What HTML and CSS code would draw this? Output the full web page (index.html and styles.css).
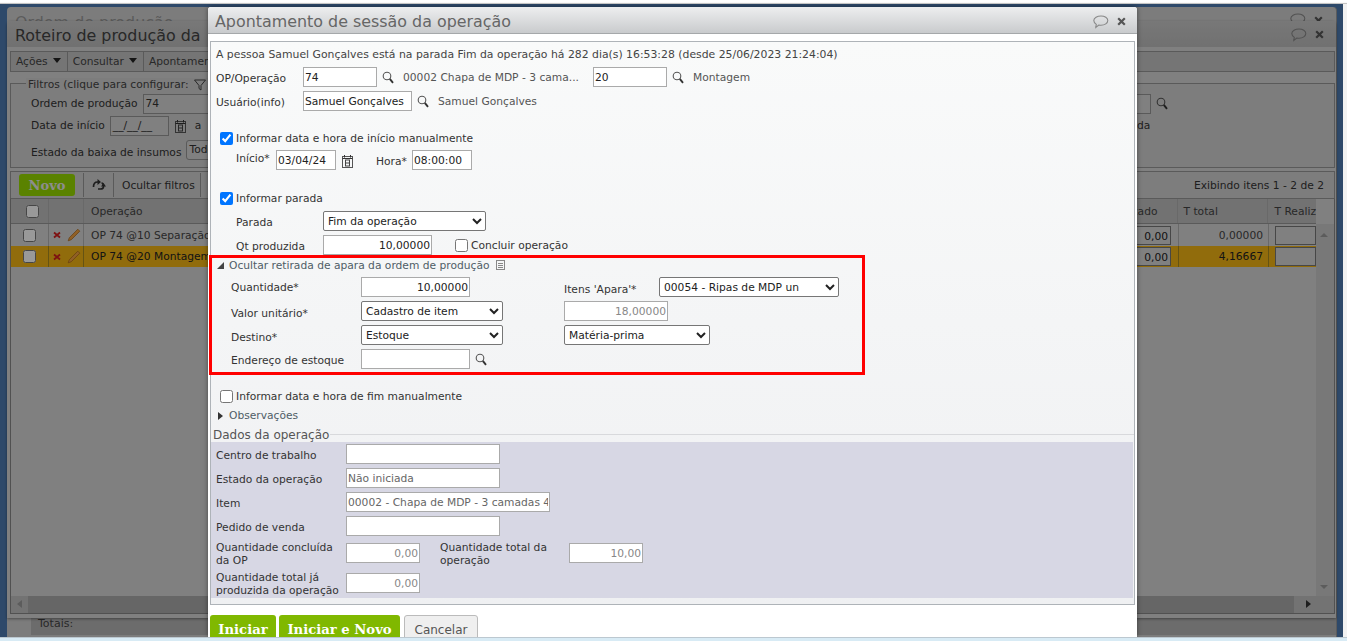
FILE: index.html
```html
<!DOCTYPE html>
<html lang="pt-BR">
<head>
<meta charset="utf-8">
<title>Apontamento de sessão da operação</title>
<link rel="stylesheet" href="styles.css">
</head>
<body>
<svg class="defs" width="0" height="0" aria-hidden="true">
  <symbol id="i-search" viewBox="0 0 12 13"><circle cx="5" cy="5" r="3.800" fill="none" stroke="#555" stroke-width="1.100"/><path d="M7.800 7.800 11 11.800" stroke="#333" stroke-width="1.900" fill="none"/></symbol>
  <symbol id="i-cal" viewBox="0 0 13 14"><rect x="1.500" y="2.500" width="10" height="11" fill="none" stroke="#555"/><path d="M1.500 4.500h10M3.500 1v2.500M9.500 1v2.500" stroke="#333" fill="none"/><rect x="4.500" y="6" width="4" height="6" fill="none" stroke="#444"/><path d="M4.500 9h4" stroke="#444"/></symbol>
  <symbol id="i-bubble" viewBox="0 0 17 16"><path d="M9 2c3.700 0 6.800 1.900 6.800 4.600s-3.100 4.600-6.800 4.600c-.8 0-1.500-.1-2.200-.2L3.800 13.500l.5-3.100C2.800 9.500 1.800 8.200 1.800 6.600 1.800 3.900 5.300 2 9 2z" fill="none" stroke="#888" stroke-width="1.100"/></symbol>
  <symbol id="i-close" viewBox="0 0 9 9"><path d="M1.200 1.200 7.800 7.800M7.800 1.200 1.200 7.800" stroke="#555" stroke-width="2.200"/></symbol>
  <symbol id="i-x" viewBox="0 0 8 8"><path d="M1 1.500 7 6.500M7 1.500 1 6.500" stroke="#d21f1f" stroke-width="1.800"/></symbol>
  <symbol id="i-pencil" viewBox="0 0 14 14"><path d="M1.200 12.800 2.300 9.700 10.800 1.200 12.800 3.200 4.300 11.700z" fill="#f0a040" stroke="#a8661a" stroke-width=".7"/></symbol>
  <symbol id="i-doc" viewBox="0 0 9 10"><rect x=".5" y=".5" width="8" height="9" fill="none" stroke="#888"/><path d="M2 3.500h5M2 5.500h5M2 7.500h5" stroke="#888"/></symbol>
  <symbol id="i-funnel" viewBox="0 0 12 12"><path d="M.5 1h11L7 6.500V11L5 9.500v-3z" fill="none" stroke="#444"/></symbol>
  <symbol id="i-refresh" viewBox="0 0 14 12"><path d="M1.500 8C1.500 4.500 3 3 5.500 3H7M9.500 4c1.500 0 2 1.500 2 3.500 0 1.500-1 2.500-3 2.500H6" fill="none" stroke="#333" stroke-width="1.700"/><path d="M5.500 0v6L9 3zM11.500 4 9 7.500h5z" fill="#333"/></symbol>
</svg>

<div class="desk">
  <section class="win win-back">
    <h2 class="win-title">Ordem de produção</h2>
    <div class="win-tools"><svg class="ico-bubble"><use href="#i-bubble"/></svg><svg class="ico-close"><use href="#i-close"/></svg></div>
    <div class="back-total"><span>Totais:</span></div>
  </section>

  <section class="win win-main">
    <header class="main-head">
      <h2 class="win-title">Roteiro de produção da</h2>
      <div class="win-tools"><svg class="ico-bubble"><use href="#i-bubble"/></svg><svg class="ico-close"><use href="#i-close"/></svg></div>
    </header>
    <nav class="menu">
      <span class="menu-item">Ações <i class="caret"></i></span>
      <span class="menu-item">Consultar <i class="caret"></i></span>
      <span class="menu-item">Apontamentos</span>
    </nav>
    <div class="filters">
      <div class="filters-legend">Filtros (clique para configurar: <svg class="ico-funnel"><use href="#i-funnel"/></svg></div>
      <div class="filters-body">
        <div class="filter-col">
          <div class="f-row"><span>Ordem de produção</span><span class="f-input f-wide">74</span></div>
          <div class="f-row"><span>Data de início</span><span class="f-input f-date">__/__/__</span><svg class="ico-cal"><use href="#i-cal"/></svg><span class="f-a">a</span></div>
          <div class="f-row f-row3"><span>Estado da baixa de insumos</span><span class="f-input f-sel">Todos</span></div>
        </div>
        <div class="filter-right">
          <div class="f-row"><span class="f-input f-tiny"></span><svg class="ico-search"><use href="#i-search"/></svg></div>
          <div class="f-row f-da"><span>da</span></div>
        </div>
      </div>
    </div>
    <div class="grid-tools">
      <span class="btn-new">Novo</span>
      <span class="gt-cell"><svg class="ico-refresh"><use href="#i-refresh"/></svg></span>
      <span class="gt-cell gt-filters">Ocultar filtros</span>
      <span class="gt-count">Exibindo itens 1 - 2 de 2</span>
    </div>
    <div class="grid">
      <div class="g-row g-head">
        <span class="c-check"><input type="checkbox" class="cb" aria-label="Selecionar todos"></span>
        <span class="c-act"></span>
        <span class="c-op">Operação</span>
        <span class="c-real">zado</span>
        <span class="c-total">T total</span>
        <span class="c-treal">T Realiz</span>
      </div>
      <div class="g-row">
        <span class="c-check"><input type="checkbox" class="cb" aria-label="Selecionar"></span>
        <span class="c-act"><svg class="ico-x"><use href="#i-x"/></svg><svg class="ico-pencil"><use href="#i-pencil"/></svg></span>
        <span class="c-op">OP 74 @10 Separação</span>
        <span class="c-real"><span class="g-input">0,00</span></span>
        <span class="c-total num">0,00000</span>
        <span class="c-treal"><span class="g-input"></span></span>
      </div>
      <div class="g-row g-sel">
        <span class="c-check"><input type="checkbox" class="cb" aria-label="Selecionar"></span>
        <span class="c-act"><svg class="ico-x"><use href="#i-x"/></svg><svg class="ico-pencil"><use href="#i-pencil"/></svg></span>
        <span class="c-op">OP 74 @20 Montagem</span>
        <span class="c-real"><span class="g-input">0,00</span></span>
        <span class="c-total num">4,16667</span>
        <span class="c-treal"><span class="g-input"></span></span>
      </div>
      <div class="sb-v"><i class="tri-up"></i><i class="tri-down"></i></div>
      <div class="sb-h"><i class="tri-left"></i><i class="tri-right"></i></div>
    </div>
  </section>

  <div class="overlay"></div>

  <section class="modal">
    <header class="modal-head">
      <h1>Apontamento de sessão da operação</h1>
      <div class="win-tools"><svg class="ico-bubble"><use href="#i-bubble"/></svg><svg class="ico-close"><use href="#i-close"/></svg></div>
    </header>
    <form class="panel">
      <p class="info">A pessoa Samuel Gonçalves está na parada Fim da operação há 282 dia(s) 16:53:28 (desde 25/06/2023 21:24:04)</p>

      <div class="row">
        <label class="lbl w-op">OP/Operação</label>
        <input class="in w74" value="74">
        <svg class="ico-search s1"><use href="#i-search"/></svg>
        <span class="txt w-item">00002 Chapa de MDP - 3 cama...</span>
        <input class="in w74" value="20">
        <svg class="ico-search s1"><use href="#i-search"/></svg>
        <span class="txt">Montagem</span>
      </div>
      <div class="row">
        <label class="lbl w-op">Usuário(info)</label>
        <input class="in w109" value="Samuel Gonçalves">
        <svg class="ico-search s1"><use href="#i-search"/></svg>
        <span class="txt">Samuel Gonçalves</span>
      </div>

      <label class="check-row gap-top"><input type="checkbox" checked><span>Informar data e hora de início manualmente</span></label>
      <div class="row ind">
        <label class="lbl lbl-inicio">Início*</label>
        <input class="in w60" value="03/04/24">
        <svg class="ico-cal"><use href="#i-cal"/></svg>
        <label class="lbl lbl-hora">Hora*</label>
        <input class="in w60" value="08:00:00">
      </div>

      <label class="check-row gap-parada"><input type="checkbox" checked><span>Informar parada</span></label>
      <div class="row ind">
        <label class="lbl w-parada lbl-p">Parada</label>
        <select class="sel w163"><option>Fim da operação</option></select>
      </div>
      <div class="row ind">
        <label class="lbl w-parada">Qt produzida</label>
        <input class="in num w109" value="10,00000">
        <label class="check-inline"><input type="checkbox"><span>Concluir operação</span></label>
      </div>

      <section class="apara">
        <div class="toggle"><i class="tri-open"></i><span>Ocultar retirada de apara da ordem de produção</span><svg class="ico-doc"><use href="#i-doc"/></svg></div>
        <div class="a-row">
          <label class="lbl w-a lbl-flat">Quantidade*</label>
          <input class="in num w109" value="10,00000">
          <label class="lbl w-itens">Itens 'Apara'*</label>
          <select class="sel w180"><option>00054 - Ripas de MDP un</option></select>
        </div>
        <div class="a-row">
          <label class="lbl w-a">Valor unitário*</label>
          <select class="sel w142"><option>Cadastro de item</option></select>
          <input class="in num dis w104 a-col2" value="18,00000" disabled>
        </div>
        <div class="a-row">
          <label class="lbl w-a">Destino*</label>
          <select class="sel w142"><option>Estoque</option></select>
          <select class="sel w146 a-col2"><option>Matéria-prima</option></select>
        </div>
        <div class="a-row">
          <label class="lbl w-a lbl-end">Endereço de estoque</label>
          <input class="in w109">
          <svg class="ico-search s2"><use href="#i-search"/></svg>
        </div>
      </section>

      <label class="check-row gap-fim"><input type="checkbox"><span>Informar data e hora de fim manualmente</span></label>
      <div class="toggle toggle-obs"><i class="tri-closed"></i><span>Observações</span></div>

      <div class="legend"><span>Dados da operação</span></div>
      <div class="dados">
        <div class="d-row"><label class="lbl w-d">Centro de trabalho</label><input class="in w154"></div>
        <div class="d-row"><label class="lbl w-d">Estado da operação</label><input class="in ro w154" value="Não iniciada"></div>
        <div class="d-row"><label class="lbl w-d">Item</label><input class="in ro w204" value="00002 - Chapa de MDP - 3 camadas 4 mm"></div>
        <div class="d-row"><label class="lbl w-d">Pedido de venda</label><input class="in w154"></div>
        <div class="d-row d-two">
          <label class="lbl w-d two">Quantidade concluída da OP</label><input class="in num dis w74" value="0,00">
          <label class="lbl w-d2 two">Quantidade total da operação</label><input class="in num dis w74" value="10,00">
        </div>
        <div class="d-row d-last"><label class="lbl w-d two">Quantidade total já produzida da operação</label><input class="in num dis w74" value="0,00"></div>
      </div>
    </form>
    <footer class="actions">
      <button type="button" class="btn-go">Iniciar</button>
      <button type="button" class="btn-go">Iniciar e Novo</button>
      <button type="button" class="btn-cancel">Cancelar</button>
    </footer>
  </section>

  <div class="strip-top"></div>
  <div class="strip-right"></div>
  <div class="strip-bottom"></div>
</div>
</body>
</html>
```

FILE: styles.css
```css
* { box-sizing: border-box; }
html, body { margin: 0; padding: 0; height: 100%; overflow: hidden; }
body { font: 10.7px "DejaVu Sans", "Noto Sans", sans-serif; color: #333; background: #fff; }
.defs { position: absolute; }
svg { display: block; flex: none; }
.desk { position: relative; width: 1347px; height: 641px; overflow: hidden; background: #4e7bb1; }

/* page chrome strips */
.strip-top { position: absolute; left: 0; top: 0; width: 100%; height: 4px; background: linear-gradient(#fff 60%, #aaa); }
.strip-right { position: absolute; right: 0; top: 4px; width: 4px; height: 633px; background: #f2f2f2; }
.strip-bottom { position: absolute; left: 0; bottom: 0; width: 100%; height: 4px; background: #d8ebf5; border-top: 1px solid #bcc8d0; }
.overlay { position: absolute; inset: 0; background: rgba(0, 0, 0, .4); }

/* background windows */
.win { position: absolute; background: #d5d5d5; border-radius: 4px 4px 0 0; }
.win-back { left: 7px; top: 7px; width: 1330px; height: 630px; background: #cfcfcf; border-right: 1px solid #999; }
.win-back .win-title { padding: 4px 8px; color: #999; }
.win-back .win-tools { position: absolute; right: 13px; top: 5px; }
.back-total { position: absolute; left: 24px; right: 0; bottom: 2px; height: 17px; background: #b5b5b5; padding-left: 7px; font-size: 11px; line-height: 12px; color: #444; }
.win-main { left: 7px; top: 21px; width: 1329px; height: 597px; box-shadow: 0 1px 3px rgba(0,0,0,.4); }
.win-title { margin: 0; font-size: 15.900px; font-weight: 400; color: #444; white-space: nowrap; line-height: 24px; }
.main-head { display: flex; justify-content: space-between; align-items: center; height: 26px; padding: 4px 12px 0 8px; background: linear-gradient(#c8c8c8, #bcbcbc); }
.main-head .win-tools { margin-top: -3px; }
.win-tools { display: flex; align-items: center; gap: 8px; }
.ico-bubble { width: 17px; height: 16px; }
.ico-close { width: 9px; height: 9px; }
.menu { display: flex; height: 21px; margin: 4px 1px 0 3px; background: #c3c3c3; border: 1px solid #969696; align-items: center; }
.menu-item { display: flex; align-items: center; gap: 5px; height: 100%; padding: 0 6px 0 5px; border-right: 1px solid #969696; color: #444; white-space: nowrap; }
.caret { width: 0; height: 0; border: 4px solid transparent; border-top: 5px solid #222; border-bottom: 0; margin-top: -2px; }
.filters { position: relative; margin: 11px 1px 0 3px; height: 85px; background: #d0d0d0; border: 1px solid #969696; }
.filters-legend { position: absolute; left: 15px; top: -6px; display: flex; align-items: center; gap: 5px; background: #d0d0d0; padding: 0 2px; line-height: 14px; color: #444; }
.ico-funnel { width: 12px; height: 12px; }
.filters-body { display: flex; justify-content: space-between; padding: 9px 0 0 20px; }
.f-row { display: flex; align-items: center; gap: 5px; height: 21px; color: #333; white-space: nowrap; }
.f-row + .f-row { margin-top: 1px; }
.f-row3 { margin-top: 6px !important; }
.f-input { display: block; height: 20px; border: 1px solid #969696; background: #d5d5d5; padding-left: 2px; line-height: 17px; }
.f-wide { width: 200px; }
.f-date { width: 59px; }
.f-sel { width: 60px; margin-top: -6px; border-radius: 3px; }
.f-tiny { width: 30px; }
.f-a { margin-left: 3px; }
.ico-cal { width: 13px; height: 14px; }
.filter-right { width: 213px; }
.f-da { padding-left: 16px; }
.ico-search { width: 12px; height: 13px; }
.grid-tools { display: flex; align-items: center; margin: 3px 1px 0 3px; height: 27px; background: #d0d0d0; border: 1px solid #969696; border-bottom: 0; padding-left: 8px; }
.btn-new { width: 56px; height: 22px; border-radius: 3px; background: #96d900; color: #ececec; font: 700 13px/23px "DejaVu Serif", serif; text-align: center; margin-right: 8px; flex: none; }
.gt-cell { display: flex; align-items: center; height: 24px; border-left: 1px solid #969696; padding: 0 7px 0 8px; color: #333; }
.gt-filters { border-right: 1px solid #969696; width: 88px; white-space: nowrap; }
.gt-count { margin-left: auto; padding-right: 10px; color: #333; white-space: nowrap; }
.ico-refresh { width: 14px; height: 12px; }
.grid { position: relative; margin: 0 1px 0 3px; height: 416px; background: #d5d5d5; border: 1px solid #888; border-top: 1px solid #969696; }
.g-row { display: flex; align-items: stretch; height: 22px; margin-right: 18px; color: #444; white-space: nowrap; overflow: hidden; }
.g-row > span { display: flex; align-items: center; border-right: 1px solid #b0b0b0; }
.g-head { height: 25px; background: #bebebe; border-bottom: 1px solid #969696; }
.g-head > span { color: #444; }
.g-head .cb { margin-left: 6px; }
.g-head .c-real { padding-right: 20px; }
.g-sel { background: #f2b414; color: #222; height: 21px; }
.g-sel > span { border-right-color: #a88a20; }
.cb { margin: 0; width: 13px; height: 13px; }
.c-check { width: 38px; justify-content: center; }
.c-act { width: 35px; gap: 6px; padding-left: 4px; }
.c-op { width: 1052px; padding-left: 7px; }
.c-real { width: 43px; justify-content: flex-end; padding-right: 7px; }
.c-total { width: 90px; padding-left: 5px; }
.c-total.num { justify-content: flex-end; padding-right: 5px; }
.c-treal { flex: 1; padding-left: 6px; border-right: 0 !important; }
.g-input { display: block; width: 35px; height: 19px; border: 1px solid #777; background: #d5d5d5; text-align: right; padding-right: 2px; line-height: 20px; color: #222; }
.c-treal .g-input { flex: 1; }
.ico-x { width: 8px; height: 8px; }
.ico-pencil { width: 14px; height: 14px; }
.sb-v { position: absolute; right: 0; top: 25px; bottom: 0; width: 18px; background: #c8c8c8; }
.tri-up { position: absolute; left: 4px; top: 9px; border: 4px solid transparent; border-bottom: 4px solid #999; border-top: 0; }
.tri-down { position: absolute; left: 4px; bottom: 24px; border: 4px solid transparent; border-top: 4px solid #999; border-bottom: 0; }
.sb-h { position: absolute; left: 0; right: 0; bottom: 0; height: 17px; background: #c0c0c0; }
.sb-h::before { content: ""; position: absolute; left: 17px; right: 40px; top: 0; bottom: 0; background: #aaa; }
.tri-left { position: absolute; left: 6px; top: 4px; border: 4px solid transparent; border-right: 5px solid #999; border-left: 0; }
.tri-right { position: absolute; right: 23px; top: 4px; border: 4px solid transparent; border-left: 5px solid #333; border-right: 0; }

/* modal */
.modal { position: absolute; left: 208px; top: 7px; width: 929px; height: 630px; display: flex; flex-direction: column; background: #fff; box-shadow: 0 0 5px rgba(0, 0, 0, .45); overflow: hidden; border-radius: 3px 3px 0 0; }
.modal-head { display: flex; justify-content: space-between; align-items: center; height: 27px; padding: 3px 11px 0 7px; background: linear-gradient(#edeeef, #c9cbcd); border-bottom: 1px solid #a5a8aa; flex: none; }
.modal-head h1 { margin: 0; padding-top: 1px; font-size: 15.900px; font-weight: 400; color: #666; line-height: 24px; }
.panel { width: 925px; height: 564px; margin: 7px 0 0 2px; border: 1px solid #aeb3b8; background: linear-gradient(#f9fafa, #eff0f2); color: #333; flex: none; }
.info { margin: 0; height: 23px; padding-left: 5px; font-size: 10.850px; line-height: 26px; color: #444; white-space: nowrap; }
.row { display: flex; align-items: center; height: 24px; padding-left: 5px; white-space: nowrap; }
.row.ind { padding-left: 25px; }
.lbl { display: block; flex: none; color: #333; padding-top: 2px; }
.txt { color: #555; padding-top: 1px; }
.w-op { width: 87px; }
.w-item { width: 190px; }
.in { display: block; flex: none; height: 20px; padding: 0 1px; border: 1px solid #aaa; background: #fff; font: 10.700px "DejaVu Sans", "Noto Sans", sans-serif; color: #222; border-radius: 0; outline: 0; }
.num { text-align: right; padding-right: 1px; }
.dis { color: #888; }
.ro { color: #666; }
.sel { display: block; flex: none; height: 20px; padding: 0; border: 1px solid #767676; border-radius: 2px; background: #fff; font: 10.700px "DejaVu Sans", "Noto Sans", sans-serif; color: #222; }
.w60 { width: 60px; }
.w74 { width: 74px; }
.w104 { width: 104px; }
.w109 { width: 109px; }
.w142 { width: 142px; }
.w146 { width: 146px; }
.w154 { width: 154px; }
.w163 { width: 163px; }
.w180 { width: 180px; }
.w204 { width: 204px; }
.s1 { margin: 0 9px 0 5px; }
.s2 { margin-left: 5px; }
.check-row { display: flex; align-items: center; gap: 3px; height: 20px; padding-left: 9px; white-space: nowrap; }
.check-row span { padding-top: 1px; }
.check-row input { margin: 0; width: 13px; height: 13px; flex: none; }
.gap-top { margin-top: 15px; }
.gap-parada { margin: 16px 0 1px; }
.gap-fim { margin-top: 11px; }
.lbl-inicio { width: 40px; padding-top: 0; margin-top: -4px; }
.lbl-hora { margin-left: 22px; width: 36px; }
.ind .ico-cal { margin: 2px 0 0 5px; }
.w-parada { width: 87px; }
.lbl-p { padding-top: 3px; }
.check-inline { display: flex; align-items: center; gap: 3px; margin-left: 23px; padding-top: 1px; }
.check-inline input { margin: 0; width: 13px; height: 13px; }
.apara { width: 656px; height: 120px; margin: -2px 0 0 -2px; border: 3px solid #f00; position: relative; }
.toggle { display: flex; align-items: center; height: 17px; padding: 0 0 3px 5px; color: #4f5d66; white-space: nowrap; }
.toggle svg { width: 9px; height: 10px; margin-left: 6px; }
.tri-open { width: 0; height: 0; margin-right: 5px; border-left: 7px solid transparent; border-bottom: 7px solid #444; }
.tri-closed { width: 0; height: 0; margin-right: 6px; border-top: 4px solid transparent; border-bottom: 4px solid transparent; border-left: 5px solid #333; }
.toggle-obs { height: 18px; padding: 1px 0 0 7px; }
.a-row { display: flex; align-items: center; height: 24px; padding-left: 19px; white-space: nowrap; }
.a-row .lbl { padding-top: 4px; }
.a-row .lbl-flat { padding-top: 1px; }
.a-row .lbl-end { padding-top: 3px; }
.w-a { width: 130px; }
.w-itens { margin-left: 94px; width: 95px; }
.a-col2 { margin-left: 61px; }
.legend { display: flex; align-items: center; height: 18px; padding: 4px 0 0 2px; font-size: 12px; color: #555; }
.legend::after { content: ""; flex: 1; height: 1px; margin: -2px 0 0 1px; background: #d8d9dc; }
.dados { width: 922px; height: 156px; background: #d7d7e4; padding-left: 5px; }
.d-row { display: flex; align-items: center; height: 24px; white-space: nowrap; }
.d-row .lbl { padding-top: 3px; }
.d-row .lbl.two { padding-top: 2px; }
.d-two { margin-top: 3px; }
.d-last { margin-top: 6px; }
.w-d { width: 130px; }
.w-d2 { width: 129px; margin-left: 20px; }
.two { white-space: normal; line-height: 13px; }
.actions { display: flex; gap: 3px; margin: 10px 0 0 2px; flex: none; }
.btn-go { height: 30px; padding: 0 0 2px; border: 0; border-radius: 3px 3px 0 0; background: #80b800; color: #fff; font: 700 13.200px "DejaVu Serif", serif; cursor: pointer; }
.actions .btn-go:first-child { width: 66px; }
.actions .btn-go:nth-child(2) { width: 121px; }
.btn-cancel { width: 74px; height: 30px; margin-left: 1px; padding: 0 0 1px; border: 1px solid #bbb; border-radius: 3px 3px 0 0; background: #efefef; color: #555; font: 12px "DejaVu Sans", sans-serif; }
```
